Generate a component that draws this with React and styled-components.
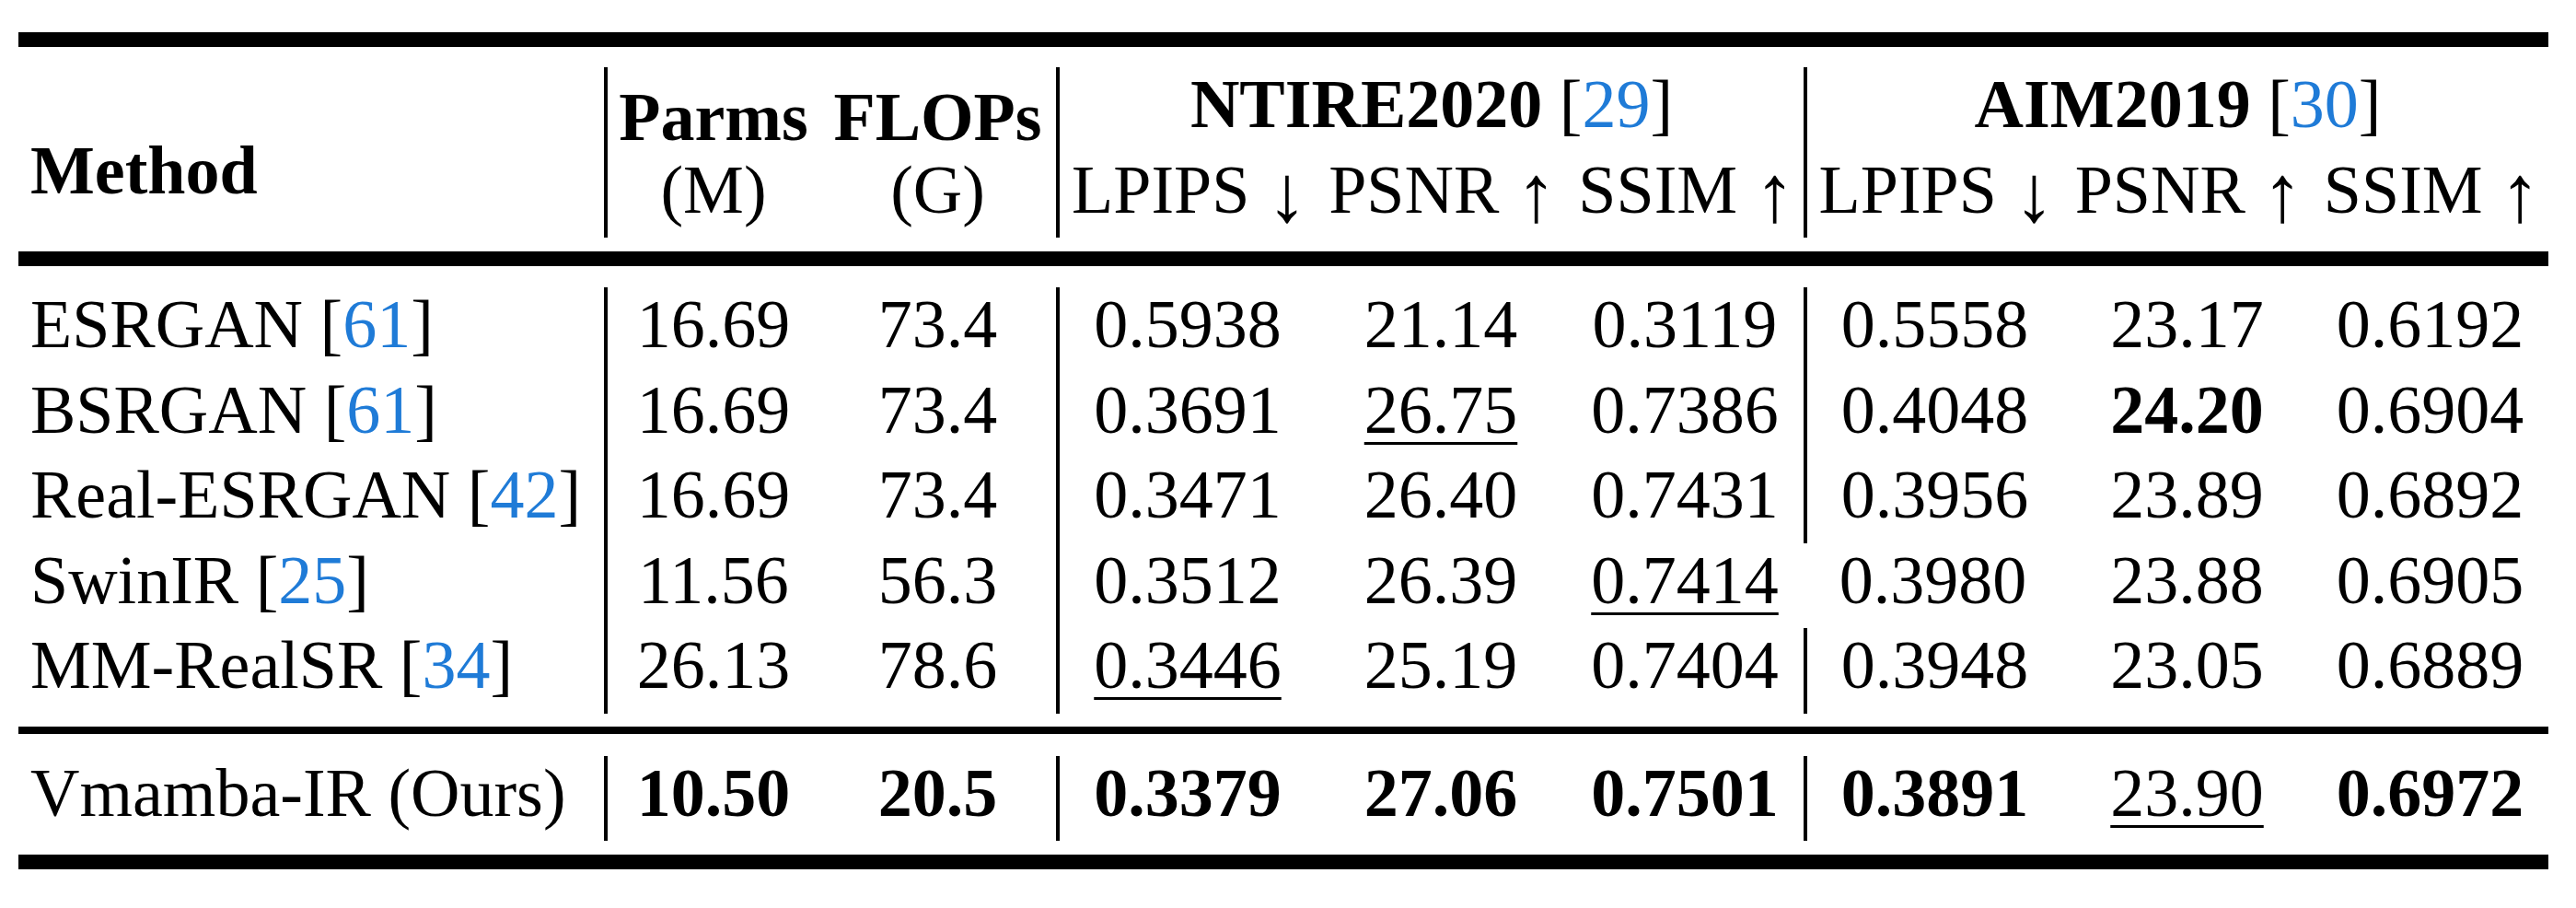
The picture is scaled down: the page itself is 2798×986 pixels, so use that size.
import React from 'react';
import styled, { createGlobalStyle } from 'styled-components';

const GlobalStyle = createGlobalStyle`
  body {
    margin: 0;
    background: #fff;
    color: #000;
    font-family: "Liberation Serif", "Times New Roman", serif;
  }
`;

// column widths: Method | Parms FLOPs | NTIRE x3 | AIM x3
const COLS = '636px 234px 257px 282px 272px 258px 281px 271px 257px';

const Page = styled.div`
  width: 2798px;
  height: 986px;
  box-sizing: border-box;
  padding: 35px 0 0 20px;
`;

const Table = styled.div`
  width: 2748px;
  font-size: 74px;
  line-height: 74px;
`;

const Rule = styled.div`
  height: ${(p) => p.$h}px;
  background: #000;
`;

const Section = styled.div`
  display: grid;
  grid-template-columns: ${COLS};
  grid-auto-rows: ${(p) => p.$row}px;
  padding: ${(p) => p.$top}px 0 ${(p) => p.$bottom}px;
`;

const Cell = styled.div`
  box-sizing: border-box;
  padding-top: 3px;
  text-align: center;
  white-space: nowrap;
  border-left: ${(p) => (p.$sep ? '4px solid #000' : 'none')};
`;

const MethodCell = styled(Cell)`
  text-align: left;
  padding-left: 13px;
`;

const HeadMethod = styled.div`
  grid-row: 1 / span 2;
  padding: 75px 0 0 13px;
  font-weight: bold;
`;

const HeadStack = styled.div`
  grid-row: 1 / span 2;
  box-sizing: border-box;
  padding-top: 15px;
  line-height: 79px;
  text-align: center;
  white-space: nowrap;
  border-left: ${(p) => (p.$sep ? '4px solid #000' : 'none')};
`;

const Line = styled.div`
  font-weight: ${(p) => (p.$bold ? 'bold' : 'normal')};
`;

const GroupTitle = styled(Cell)`
  grid-column: span 3;
`;

const Bold = styled.span`
  font-weight: bold;
`;

const Cite = styled.span`
  color: #1f7bd7;
`;

const Arrow = styled.span`
  display: inline-block;
  width: 40px;
  text-align: center;
  font-size: 88px;
  line-height: 0;
  vertical-align: -9px;
`;

const Value = styled.span`
  font-weight: ${(p) => (p.$bold ? 'bold' : 'normal')};
  text-decoration: ${(p) => (p.$under ? 'underline' : 'none')};
  text-decoration-thickness: 3px;
  text-underline-offset: 10px;
`;

const rows = [
  { name: 'ESRGAN', cite: '61', vals: ['16.69', '73.4', '0.5938', '21.14', '0.3119', '0.5558', '23.17', '0.6192'] },
  { name: 'BSRGAN', cite: '61', vals: ['16.69', '73.4', '0.3691', '_26.75', '0.7386', '0.4048', '*24.20', '0.6904'] },
  { name: 'Real-ESRGAN', cite: '42', vals: ['16.69', '73.4', '0.3471', '26.40', '0.7431', '0.3956', '23.89', '0.6892'] },
  { name: 'SwinIR', cite: '25', vals: ['11.56', '56.3', '0.3512', '26.39', '_0.7414', '0.3980', '23.88', '0.6905'], gap: true },
  { name: 'MM-RealSR', cite: '34', vals: ['26.13', '78.6', '_0.3446', '25.19', '0.7404', '0.3948', '23.05', '0.6889'] },
];

const ours = ['*10.50', '*20.5', '*0.3379', '*27.06', '*0.7501', '*0.3891', '_23.90', '*0.6972'];

// separators sit before value index 0 (Parms), 2 (NTIRE) and 5 (AIM)
const SEPS = [0, 2, 5];

function renderValues(vals, gap) {
  return vals.map((raw, i) => {
    const bold = raw[0] === '*';
    const under = raw[0] === '_';
    const text = bold || under ? raw.slice(1) : raw;
    const sep = SEPS.includes(i) && !(gap && i === 5);
    return (
      <Cell key={i} $sep={sep}>
        <Value $bold={bold} $under={under}>{text}</Value>
      </Cell>
    );
  });
}

const metrics = [
  ['LPIPS', '↓'],
  ['PSNR', '↑'],
  ['SSIM', '↑'],
];

function App() {
  return (
    <Page>
      <GlobalStyle />
      <Table>
        <Rule $h={16} />
        <Section $row={92.5} $top={22} $bottom={15}>
          <HeadMethod>Method</HeadMethod>
          <HeadStack $sep>
            <Line $bold>Parms</Line>
            <Line>(M)</Line>
          </HeadStack>
          <HeadStack>
            <Line $bold>FLOPs</Line>
            <Line>(G)</Line>
          </HeadStack>
          <GroupTitle $sep>
            <Bold>NTIRE2020</Bold> [<Cite>29</Cite>]
          </GroupTitle>
          <GroupTitle $sep>
            <Bold>AIM2019</Bold> [<Cite>30</Cite>]
          </GroupTitle>
          {[0, 1].map((g) =>
            metrics.map(([label, arrow], i) => (
              <Cell key={`${g}-${i}`} $sep={i === 0}>
                {label} <Arrow>{arrow}</Arrow>
              </Cell>
            ))
          )}
        </Section>
        <Rule $h={16} />
        <Section $row={92.5} $top={23} $bottom={14}>
          {rows.map((r) => (
            <React.Fragment key={r.name}>
              <MethodCell>
                {r.name} [<Cite>{r.cite}</Cite>]
              </MethodCell>
              {renderValues(r.vals, r.gap)}
            </React.Fragment>
          ))}
        </Section>
        <Rule $h={8} />
        <Section $row={92} $top={24} $bottom={15}>
          <MethodCell>Vmamba-IR (Ours)</MethodCell>
          {renderValues(ours, false)}
        </Section>
        <Rule $h={16} />
      </Table>
    </Page>
  );
}

export default App;
